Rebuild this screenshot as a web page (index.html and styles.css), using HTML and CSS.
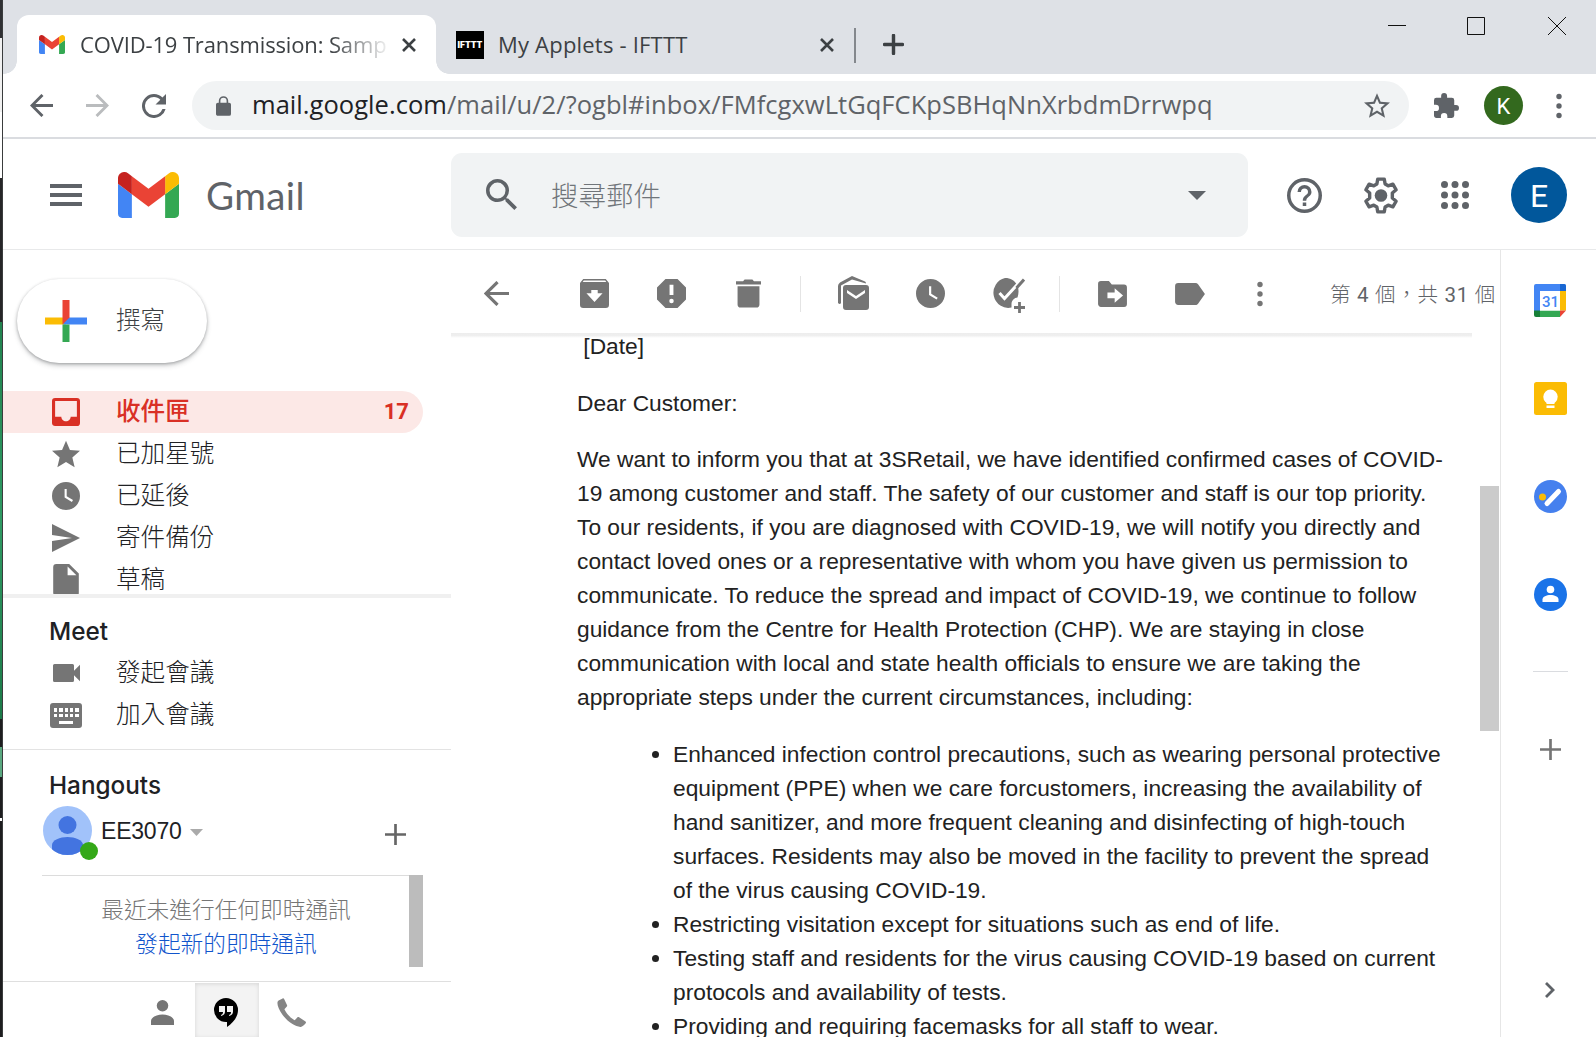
FILE: index.html
```html
<!DOCTYPE html>
<html lang="zh-Hant">
<head>
<meta charset="utf-8">
<title>COVID-19 Transmission: Sample - Gmail</title>
<link rel="stylesheet" href="styles.css">
</head>
<body>
<svg class="sprite" aria-hidden="true">
  <symbol id="gmail" viewBox="52 42 88 66" preserveAspectRatio="none"><path fill="#4285f4" d="M58 108h14V74L52 59v43c0 3.32 2.69 6 6 6"/><path fill="#34a853" d="M120 108h14c3.32 0 6-2.69 6-6V59l-20 15"/><path fill="#fbbc04" d="M120 48v26l20-15v-8c0-7.42-8.47-11.65-14.4-7.2"/><path fill="#ea4335" d="M72 74V48l24 18 24-18v26L96 92"/><path fill="#c5221f" d="M52 51v8l20 15V48l-5.6-4.2c-5.94-4.45-14.4-.22-14.4 7.2"/></symbol>
  <symbol id="close" viewBox="0 0 16 16"><path d="M2 2l12 12M14 2L2 14" fill="none" stroke="currentColor" stroke-width="2.6"/></symbol>
  <symbol id="plus" viewBox="0 0 22 22"><path d="M11 0v22M0 11h22" fill="none" stroke="currentColor" stroke-width="2.8"/></symbol>
  <symbol id="plus-bold" viewBox="0 0 22 22"><path d="M11 1.500v19M1.500 11h19" fill="none" stroke="currentColor" stroke-width="3.6" stroke-linecap="round"/></symbol>
  <symbol id="arrow" viewBox="0 0 24 24"><path d="M24 12H2M13 1L2 12l11 11" fill="none" stroke="currentColor" stroke-width="3"/></symbol>
  <symbol id="reload" viewBox="4 4 16 16"><path d="M17.65 6.35A7.96 7.96 0 0 0 12 4a8 8 0 1 0 7.73 10h-2.08A6 6 0 1 1 12 6c1.66 0 3.14.69 4.22 1.78L13 11h7V4z"/></symbol>
  <symbol id="lock" viewBox="4 1 16 21"><path d="M18 8h-1V6A5 5 0 0 0 7 6v2H6a2 2 0 0 0-2 2v10c0 1.100.9 2 2 2h12a2 2 0 0 0 2-2V10a2 2 0 0 0-2-2zM8.700 8V6a3.300 3.300 0 0 1 6.600 0v2z"/></symbol>
  <symbol id="star-o" viewBox="2 2 20 19"><path d="M22 9.240l-7.190-.620L12 2 9.190 8.630 2 9.240l5.460 4.730L5.820 21 12 17.270 18.180 21l-1.630-7.030zM12 15.400l-3.760 2.270 1-4.280-3.320-2.880 4.380-.380L12 6.100l1.710 4.040 4.380.380-3.320 2.880 1 4.280z"/></symbol>
  <symbol id="star" viewBox="2 2 20 19"><path d="M12 17.270L18.180 21l-1.640-7.030L22 9.240l-7.190-.610L12 2 9.190 8.630 2 9.240l5.460 4.730L5.820 21z"/></symbol>
  <symbol id="puzzle" viewBox="2 1 21 21"><path d="M20.500 11H19V7a2 2 0 0 0-2-2h-4V3.500a2.500 2.500 0 0 0-5 0V5H4a2 2 0 0 0-2 2v3.800h1.500a2.700 2.700 0 0 1 0 5.400H2V20c0 1.100.9 2 2 2h3.800v-1.500a2.700 2.700 0 0 1 5.400 0V22H17a2 2 0 0 0 2-2v-4h1.500a2.500 2.500 0 0 0 0-5z"/></symbol>
  <symbol id="dots" viewBox="0 0 6 26"><circle cx="3" cy="3.500" r="2.700"/><circle cx="3" cy="13" r="2.700"/><circle cx="3" cy="22.500" r="2.700"/></symbol>
  <symbol id="menu" viewBox="0 0 32 22"><path d="M0 0h32v4H0zM0 9h32v4H0zM0 18h32v4H0z"/></symbol>
  <symbol id="search" viewBox="3 3 17.500 17.500"><path d="M15.500 14h-.790l-.280-.270A6.470 6.470 0 0 0 16 9.500 6.500 6.500 0 1 0 9.500 16c1.610 0 3.090-.590 4.230-1.570l.270.280v.790l5 4.990L20.490 19zm-6 0a4.500 4.500 0 1 1 0-9 4.500 4.500 0 0 1 0 9z"/></symbol>
  <symbol id="caret" viewBox="0 0 18 9" preserveAspectRatio="none"><path d="M0 0h18L9 9z"/></symbol>
  <symbol id="help" viewBox="2 2 20 20"><path d="M11 18h2v-2h-2zm1-16a10 10 0 1 0 0 20 10 10 0 0 0 0-20zm0 18a8 8 0 1 1 0-16 8 8 0 0 1 0 16zm0-14a4 4 0 0 0-4 4h2a2 2 0 1 1 4 0c0 2-3 1.750-3 5h2c0-2.250 3-2.500 3-5a4 4 0 0 0-4-4z"/></symbol>
  <symbol id="gear" viewBox="2 1.800 20 20.400"><path fill="none" stroke="currentColor" stroke-width="1.900" stroke-linejoin="round" d="M10.200 2.900h3.600l.5 2.700 1.700 1 2.600-.9 1.800 3.100-2.100 1.800v2.800l2.100 1.800-1.800 3.100-2.600-.9-1.700 1-.5 2.700h-3.600l-.5-2.700-1.700-1-2.600.9-1.800-3.100 2.100-1.800v-2.800L3.600 8.800l1.800-3.100 2.600.9 1.700-1z"/><circle cx="12" cy="12" r="3.500"/></symbol>
  <symbol id="apps" viewBox="0 0 28 28"><circle cx="3.500" cy="3.500" r="3.500"/><circle cx="14" cy="3.500" r="3.500"/><circle cx="24.500" cy="3.500" r="3.500"/><circle cx="3.500" cy="14" r="3.500"/><circle cx="14" cy="14" r="3.500"/><circle cx="24.500" cy="14" r="3.500"/><circle cx="3.500" cy="24.500" r="3.500"/><circle cx="14" cy="24.500" r="3.500"/><circle cx="24.500" cy="24.500" r="3.500"/></symbol>
  <symbol id="inbox" viewBox="3 3 18 18"><path d="M19 3H5a2 2 0 0 0-2 2v14c0 1.100.9 2 2 2h14a2 2 0 0 0 2-2V5a2 2 0 0 0-2-2zm0 12h-4c0 1.660-1.350 3-3 3s-3-1.340-3-3H5V5h14z"/></symbol>
  <symbol id="clock" viewBox="2 2 20 20"><path d="M12 2a10 10 0 1 0 0 20 10 10 0 0 0 0-20zm4.200 14.200L11 13V7h1.500v5.200l4.500 2.700z"/></symbol>
  <symbol id="send" viewBox="2 3 21 18" preserveAspectRatio="none"><path d="M2 21l21-9L2 3v7l15 2-15 2z"/></symbol>
  <symbol id="draft" viewBox="4 2 16 20"><path d="M6 2a2 2 0 0 0-2 2v16c0 1.100.9 2 2 2h12a2 2 0 0 0 2-2V8l-6-6zm7 7V3.500L18.500 9z"/></symbol>
  <symbol id="video" viewBox="3 6 18 12"><path d="M17 10.500V7a1 1 0 0 0-1-1H4a1 1 0 0 0-1 1v10a1 1 0 0 0 1 1h12a1 1 0 0 0 1-1v-3.500l4 4v-11z"/></symbol>
  <symbol id="keyboard" viewBox="0 0 32 25"><path fill-rule="evenodd" d="M3 0h26a3 3 0 0 1 3 3v19a3 3 0 0 1-3 3H3a3 3 0 0 1-3-3V3a3 3 0 0 1 3-3zM4 5v4h3V5zm5 0v4h4V5zm6 0v4h3V5zm5 0v4h3V5zm5 0v4h4V5zM4 11v3h3v-3zm5 0v3h4v-3zm6 0v3h3v-3zm5 0v3h3v-3zm5 0v3h4v-3zM9 18v3h14v-3z"/></symbol>
  <symbol id="person" viewBox="0 0 24 26"><circle cx="12" cy="6" r="6"/><path d="M0 26v-4c0-4 6-7 12-7s12 3 12 7v4z"/></symbol>
  <symbol id="hangouts" viewBox="0 0 24 29"><path fill-rule="evenodd" d="M12 0a12 12 0 0 1 12 12c0 7-5 13-11 17v-5h-1A12 12 0 0 1 12 0zM5 8v6h4c0 1.500-.5 2.500-2 3v1c3-.5 4-2.500 4-4.500V8zm8 0v6h4c0 1.500-.5 2.500-2 3v1c3-.5 4-2.500 4-4.500V8z"/></symbol>
  <symbol id="phone" viewBox="3 3 18 18"><path d="M6.500 3.300L4 4.500C2.500 5.500 3.300 9 6.500 13.500S14.500 20.500 17.500 21c1 .1 2-.8 3.300-2.300.3-.4.200-.8-.1-1.100l-4-2.600c-.4-.2-.8-.2-1.100.1l-1.600 1.700C12 16 8.800 12.700 7.600 10l1.500-1.700c.2-.3.300-.5.1-.9L7.500 3.700c-.2-.4-.6-.6-1-.4z"/></symbol>
  <symbol id="archive" viewBox="3 3 18 18"><path fill-rule="evenodd" d="M5 3h14l2 2.500V19a2 2 0 0 1-2 2H5a2 2 0 0 1-2-2V5.500zm.3 1l-.6.900h14.600l-.6-.9zM10 9.800v2H7l5 5.500 5-5.500h-3v-2z"/></symbol>
  <symbol id="spam" viewBox="3 3 18 18"><path d="M15.730 3H8.270L3 8.270v7.460L8.270 21h7.460L21 15.730V8.270zM12 18a1.400 1.400 0 1 1 0-2.800 1.400 1.400 0 0 1 0 2.800zm1.200-5h-2.400V6.500h2.400z"/></symbol>
  <symbol id="trash" viewBox="4 3 16 18"><path d="M5 19a2 2 0 0 0 2 2h10a2 2 0 0 0 2-2V7.300H5zM20 4.200h-4.500L14.500 3h-5l-1 1.200H4v2h16z"/></symbol>
  <symbol id="unread" viewBox="0 0 31 34"><path fill-rule="evenodd" d="M0 27V10q0-2 2-3.500L14 0l13 5.500q1 .5 1 2L14 3.500 3 9.500V27q-1 2-3 0zM8 9h20a3 3 0 0 1 3 3v19a3 3 0 0 1-3 3H8a3 3 0 0 1-3-3V12a3 3 0 0 1 3-3zm1 5v3l9 6 9-6v-3l-9 6z"/></symbol>
  <symbol id="task" viewBox="0 0 34 36"><path d="M14 1c6 0 9 2.500 11.500 6 2.500 4 2.500 9 1 13.500-3 0-6 3-6 6.500v3.500A14.500 14.800 0 1 1 14 1z"/><path d="M30 3.500L13.500 21.500l-5-5.500" fill="none" stroke="#fff" stroke-width="3"/><path d="M33 2.500L25.500 11" fill="none" stroke="currentColor" stroke-width="3"/><path d="M28.500 25v11M23 30.500h11" fill="none" stroke="currentColor" stroke-width="2.800"/></symbol>
  <symbol id="move" viewBox="2 4 20 18"><path d="M20 6.500h-8.500L9.500 4H4a2 2 0 0 0-2 2v14c0 1.100.9 2 2 2h16a2 2 0 0 0 2-2V8.500a2 2 0 0 0-2-2zM13.500 19v-3H8.500v-4h5V9l5.800 5z"/></symbol>
  <symbol id="label" viewBox="3 5 19 14"><path d="M17.630 5.840A2 2 0 0 0 16 5H5a2 2 0 0 0-2 2v10c0 1.100.9 2 2 2h11c.670 0 1.270-.330 1.630-.840L22 12z"/></symbol>
  <symbol id="chevron" viewBox="0 0 10 16"><path d="M1 1l7 7-7 7" fill="none" stroke="currentColor" stroke-width="2.800"/></symbol>
</svg>

<div class="screen">
  <div class="desktop-edge"><i class="e1"></i><i class="e2"></i><i class="e3"></i><i class="e4"></i><i class="e5"></i><i class="e6"></i></div>
  <div class="window">
    <div class="tabs">
      <div class="tab active">
        <svg class="fav"><use href="#gmail"/></svg>
        <span class="tab-title t1">COVID-19 Transmission: Samp</span>
        <svg class="x"><use href="#close"/></svg>
      </div>
      <div class="tab second">
        <span class="ifttt">IFTTT</span>
        <span class="tab-title t2">My Applets - IFTTT</span>
        <svg class="x"><use href="#close"/></svg>
      </div>
      <svg class="newtab"><use href="#plus-bold"/></svg>
      <div class="winctl">
        <svg width="18" height="18"><path d="M0 8.500h18"/></svg>
        <svg width="18" height="18"><path d="M.5.5h17v17H.5z"/></svg>
        <svg width="18" height="18"><path d="M0 0l18 18M18 0L0 18"/></svg>
      </div>
    </div>

    <div class="addressbar">
      <svg class="nav-i"><use href="#arrow"/></svg>
      <svg class="nav-i fwd"><use href="#arrow"/></svg>
      <svg class="nav-i reload"><use href="#reload"/></svg>
      <div class="omnibox">
        <svg class="lock"><use href="#lock"/></svg>
        <span class="url"><b>mail.google.com</b>/mail/u/2/?ogbl#inbox/FMfcgxwLtGqFCKpSBHqNnXrbdmDrrwpq</span>
        <svg class="bookmark"><use href="#star-o"/></svg>
      </div>
      <svg class="ext"><use href="#puzzle"/></svg>
      <span class="profile">K</span>
      <svg class="more"><use href="#dots"/></svg>
    </div>

    <header class="gm-header">
      <svg class="burger"><use href="#menu"/></svg>
      <svg class="logo"><use href="#gmail"/></svg>
      <span class="brand">Gmail</span>
      <div class="search">
        <svg class="search-i"><use href="#search"/></svg>
        <span class="ph">搜尋郵件</span>
        <svg class="drop"><use href="#caret"/></svg>
      </div>
      <svg class="help"><use href="#help"/></svg>
      <svg class="gear"><use href="#gear"/></svg>
      <svg class="apps"><use href="#apps"/></svg>
      <span class="account">E</span>
    </header>

    <div class="body">
      <aside class="side">
        <div class="upper">
          <button class="compose">
            <svg width="42" height="42" viewBox="0 0 42 42"><path fill="#fbbc04" d="M0 17.500h21v7H0z"/><path fill="#4285f4" d="M21 17.500h21v7H18z"/><path fill="#34a853" d="M17.500 24.500h7V42h-7z"/><path fill="#ea4335" d="M17.500 0h7v17.500l-7 7z"/></svg>
            <span>撰寫</span>
          </button>
          <nav>
            <div class="row on"><svg class="ic i28"><use href="#inbox"/></svg><span>收件匣</span><em>17</em></div>
            <div class="row"><svg class="ic i28"><use href="#star"/></svg><span>已加星號</span></div>
            <div class="row"><svg class="ic i28"><use href="#clock"/></svg><span>已延後</span></div>
            <div class="row"><svg class="ic i28"><use href="#send"/></svg><span>寄件備份</span></div>
            <div class="row last"><svg class="ic draft"><use href="#draft"/></svg><span>草稿</span></div>
          </nav>
        </div>
        <section class="meet">
          <h2>Meet</h2>
          <div class="row"><svg class="ic video"><use href="#video"/></svg><span>發起會議</span></div>
          <div class="row"><svg class="ic kb"><use href="#keyboard"/></svg><span>加入會議</span></div>
        </section>
        <section class="hang">
          <h2>Hangouts</h2>
          <div class="user">
            <div class="avatar">
              <svg width="49" height="49" viewBox="0 0 49 49"><defs><clipPath id="av"><circle cx="24.500" cy="24.500" r="24.500"/></clipPath></defs><g clip-path="url(#av)"><path fill="#a1c2fa" d="M0 0h49v49H0z"/><g fill="#4374e0"><circle cx="24.500" cy="19" r="9"/><path d="M9 49V39c0-5 8-8 15.500-8S40 34 40 39v10z"/></g></g></svg>
              <i class="online"></i>
            </div>
            <span class="name">EE3070</span>
            <svg class="user-drop"><use href="#caret"/></svg>
            <svg class="add"><use href="#plus"/></svg>
          </div>
          <div class="chats">
            <div class="msg"><p>最近未進行任何即時通訊</p><p><a>發起新的即時通訊</a></p></div>
            <i class="thumb"></i>
          </div>
          <div class="switch">
            <span><svg width="23" height="25"><use href="#person"/></svg></span>
            <span class="sel"><svg width="24" height="29"><use href="#hangouts"/></svg></span>
            <span class="dial"><svg width="29" height="29"><use href="#phone"/></svg></span>
          </div>
        </section>
      </aside>

      <main class="mail">
        <div class="toolbar">
          <svg class="t-back"><use href="#arrow"/></svg>
          <svg class="t-arch"><use href="#archive"/></svg>
          <svg class="t-spam"><use href="#spam"/></svg>
          <svg class="t-trash"><use href="#trash"/></svg>
          <i class="sep"></i>
          <svg class="t-unread"><use href="#unread"/></svg>
          <svg class="t-clock"><use href="#clock"/></svg>
          <svg class="t-task"><use href="#task"/></svg>
          <i class="sep s2"></i>
          <svg class="t-move"><use href="#move"/></svg>
          <svg class="t-label"><use href="#label"/></svg>
          <svg class="t-dots"><use href="#dots"/></svg>
          <span class="count">第 <b>4</b> 個，共 <b>31</b> 個</span>
        </div>
        <div class="scroll">
          <article class="letter">
            <p>&nbsp;[Date]</p>
            <p>Dear Customer:</p>
            <p>We want to inform you that at 3SRetail, we have identified confirmed cases of COVID-<br>19 among customer and staff. The safety of our customer and staff is our top priority.<br>To our residents, if you are diagnosed with COVID-19, we will notify you directly and<br>contact loved ones or a representative with whom you have given us permission to<br>communicate. To reduce the spread and impact of COVID-19, we continue to follow<br>guidance from the Centre for Health Protection (CHP). We are staying in close<br>communication with local and state health officials to ensure we are taking the<br>appropriate steps under the current circumstances, including:</p>
            <ul>
              <li>Enhanced infection control precautions, such as wearing personal protective<br>equipment (PPE) when we care forcustomers, increasing the availability of<br>hand sanitizer, and more frequent cleaning and disinfecting of high-touch<br>surfaces. Residents may also be moved in the facility to prevent the spread<br>of the virus causing COVID-19.</li>
              <li>Restricting visitation except for situations such as end of life.</li>
              <li>Testing staff and residents for the virus causing COVID-19 based on current<br>protocols and availability of tests.</li>
              <li>Providing and requiring facemasks for all staff to wear.</li>
            </ul>
          </article>
          <i class="scrollthumb"></i>
        </div>
      </main>

      <aside class="apps-rail">
        <svg width="32" height="33" viewBox="0 0 32 33"><path fill="#4285f4" d="M2 0h28a2 2 0 0 1 2 2v5H6v20H0V2a2 2 0 0 1 2-2z"/><path fill="#1967d2" d="M26 0h4a2 2 0 0 1 2 2v5h-6z"/><path fill="#fbbc04" d="M26 7h6v19.500h-6z"/><path fill="#34a853" d="M6 26.500h20V33H6z"/><path fill="#188038" d="M0 26.500h6V33H2a2 2 0 0 1-2-2z"/><path fill="#ea4335" d="M26 26.500h6L26 33z"/><path fill="#fff" d="M6 7h20v19.500H6z"/><text x="16.500" y="22.500" text-anchor="middle" class="cal-n">31</text></svg>
        <svg width="33" height="33" viewBox="0 0 33 33"><rect width="33" height="33" rx="2.500" fill="#fbbc04"/><g fill="#fff"><circle cx="16.500" cy="14.800" r="7.200"/><path d="M12.500 18h8v4h-8zM12.500 23.500h8V26h-8z"/></g></svg>
        <svg width="33" height="33" viewBox="0 0 33 33"><circle cx="16.500" cy="16.500" r="16.500" fill="#4580ee"/><circle cx="8.500" cy="17" r="3.500" fill="#fbbc04"/><path d="M13 23.500L24.500 11.500" stroke="#fff" stroke-width="5" stroke-linecap="round"/></svg>
        <svg width="33" height="33" viewBox="0 0 33 33"><circle cx="16.500" cy="16.500" r="16.500" fill="#1a73e8"/><g fill="#fff"><circle cx="16.500" cy="11.500" r="3.800"/><path d="M8.500 24v-2.500c0-3 4-4.500 8-4.500s8 1.500 8 4.500V24z"/></g></svg>
        <i class="rail-line"></i>
        <svg class="rail-plus"><use href="#plus"/></svg>
        <svg class="rail-chev"><use href="#chevron"/></svg>
      </aside>
    </div>
  </div>
</div>
</body>
</html>
```
FILE: styles.css
```css
* { box-sizing: border-box; }
body { margin: 0; background: #fff; font-family: Roboto, "Noto Sans CJK TC", sans-serif; color: #202124; }
svg { display: block; flex: none; fill: currentColor; }
p, h2, ul { margin: 0; }
i, em { font-style: normal; }
.sprite { position: absolute; width: 0; height: 0; }
.screen { width: 1596px; height: 1037px; display: flex; overflow: hidden; }

/* sliver of the desktop left of the window */
.desktop-edge { width: 3px; flex: none; display: flex; flex-direction: column; background: #1d1d1f; border-right: 1px solid #3a3c3d; }
.e1 { height: 38px; background: #2f3033; }
.e2 { height: 140px; background: linear-gradient(#f1f1f1 74px, #fff 74px); }
.e3 { height: 144px; background: #262628; }
.e4 { height: 397px; background: linear-gradient(#21834f, #2f9a63 50%, #1c7a48); }
.e5 { height: 30px; margin-top: 28px; background: #5aa880; }
.e6 { height: 3px; margin-top: 41px; background: #fff; }

.window { flex: 1; min-width: 0; display: flex; flex-direction: column; }

/* tab strip */
.tabs { height: 74px; flex: none; display: flex; background: #dee1e6; padding-left: 14px; color: #3c4043; }
.tab { display: flex; align-items: center; height: 59px; margin-top: 15px; position: relative; font: 22px "Open Sans", sans-serif; }
.tab.active { width: 419px; background: #fff; border-radius: 12px 12px 0 0; padding-left: 22px; }
.tab.active::before, .tab.active::after { content: ""; position: absolute; bottom: 0; width: 13px; height: 13px; }
.tab.active::before { left: -13px; background: radial-gradient(circle at 0 0, transparent 12.5px, #fff 13px); }
.tab.active::after { right: -13px; background: radial-gradient(circle at 100% 0, transparent 12.5px, #fff 13px); }
.fav { width: 26px; height: 19px; }
.tab-title { white-space: nowrap; line-height: 36px; margin-top: -2px; }
.t1 { margin-left: 15px; width: 306px; letter-spacing: -.14px; -webkit-mask-image: linear-gradient(90deg, #000 250px, transparent 312px); }
.x { width: 16px; height: 16px; }
.active .x { margin-left: 15px; }
.second { width: 420px; padding-left: 20px; }
.second::after { content: ""; position: absolute; right: 0; top: 13px; width: 2px; height: 35px; background: #84888d; }
.ifttt { width: 28px; height: 28px; background: #000; color: #fff; font: 900 8.5px/28px Inter, sans-serif; text-align: center; }
.t2 { margin-left: 14px; width: 321px; letter-spacing: .2px; }
.newtab { width: 21px; height: 21px; margin: 34px 0 0 27px; }
.winctl { margin-left: auto; display: flex; gap: 62px; padding: 17px 30px 0 0; }
.winctl svg { fill: none; stroke: #111; stroke-width: 1; overflow: visible; }
.winctl svg:nth-child(2) { margin: 0 1px 0 -1px; }

/* address bar */
.addressbar { height: 65px; flex: none; display: flex; align-items: center; border-bottom: 2px solid #dadce0; color: #5f6368; padding-left: 27px; }
.nav-i { width: 23px; height: 23px; }
.fwd { transform: scaleX(-1); margin-left: 33px; color: #babcbe; }
.reload { width: 24px; height: 24px; margin-left: 33px; }
.omnibox { width: 1217px; height: 49px; margin-left: 26px; border-radius: 25px; background: #f1f3f4; display: flex; align-items: center; padding-left: 24px; }
.lock { width: 15px; height: 20px; }
.url { margin: -3px 0 0 21px; width: 1112px; font: 25.500px/40px "Open Sans", sans-serif; letter-spacing: .04px; white-space: nowrap; }
.url b { font-weight: 400; color: #202124; }
.bookmark { width: 26px; height: 25px; }
.ext { width: 25px; height: 25px; margin-left: 25px; }
.profile { width: 39px; height: 39px; margin-left: 25px; border-radius: 50%; background: #33691e; color: #fff; font: 22px/41px Roboto, sans-serif; text-align: center; flex: none; }
.more { width: 6px; height: 26px; margin-left: 33px; }

/* mail header */
.gm-header { height: 111px; flex: none; display: flex; align-items: center; border-bottom: 1px solid #e8e9ea; color: #5f6368; padding: 2px 0 0 47px; }
.burger { width: 32px; height: 22px; }
.logo { width: 61px; height: 46px; margin-left: 36px; }
.brand { margin-left: 27px; width: 245px; font: 38.500px/50px Lato, sans-serif; letter-spacing: .4px; }
.search { width: 797px; height: 84px; border-radius: 11px; background: #f1f3f4; display: flex; align-items: center; padding-left: 35px; flex: none; }
.search-i { width: 31px; height: 31px; margin-top: -2px; }
.ph { margin: -2px 0 0 34px; width: 637px; font-size: 27.500px; font-weight: 300; color: #70757a; }
.drop { width: 18px; height: 9px; }
.help { width: 35px; height: 35px; margin-left: 39px; }
.gear { width: 36px; height: 37px; margin-left: 41px; }
.apps { width: 28px; height: 28px; margin-left: 42px; }
.account { width: 56px; height: 56px; margin-left: 42px; border-radius: 50%; background: #01579b; color: #fff; font: 32px/58px Roboto, sans-serif; text-align: center; flex: none; }

.body { flex: 1; min-height: 0; display: flex; }

/* left column */
.side { width: 448px; flex: none; display: flex; flex-direction: column; }
.upper { height: 348px; overflow: hidden; border-bottom: 4px solid #f0f0f0; padding-top: 29px; flex: none; }
.compose { width: 190px; height: 84px; margin: 0 0 28px 14px; border: 0; border-radius: 42px; background: #fff; box-shadow: 0 1px 3px rgba(60,64,67,.35), 0 3px 5px rgba(60,64,67,.22); display: flex; align-items: center; padding: 0 0 0 28px; font: 300 24.500px Roboto, "Noto Sans CJK TC", sans-serif; color: #3c4043; }
.compose span { margin: -5px 0 0 29px; }
.row { height: 42px; display: flex; align-items: center; padding-left: 49px; font-weight: 300; font-size: 24.600px; line-height: 42px; }
.row span { margin-left: 36px; }
.ic { color: #757575; }
.i28 { width: 28px; height: 28px; }
.row.on { width: 420px; border-radius: 0 21px 21px 0; background: #fce8e6; color: #d93025; font-weight: 500; }
.on .ic { color: #d93025; }
.row em { margin-left: auto; padding-right: 14px; font: 700 22px/44px Roboto, sans-serif; }
.draft { width: 26px; height: 32px; margin: 0 1px; }
.meet { height: 152px; flex: none; border-bottom: 1px solid #e3e3e3; padding-top: 12px; }
h2 { font: 500 24.300px/42px Inter, sans-serif; padding-left: 46px; }
.video { width: 27px; height: 18px; margin-left: 1px; }
.kb { width: 32px; height: 25px; margin: 0 -2px; }
.hang { flex: 1; display: flex; flex-direction: column; padding-top: 14px; }
.user { height: 69px; flex: none; margin-left: 40px; width: 380px; display: flex; align-items: flex-start; }
.avatar { position: relative; width: 49px; height: 49px; }
.online { position: absolute; left: 37px; top: 36px; width: 18px; height: 18px; border-radius: 50%; background: #34a818; }
.name { font: 23px/51px "Liberation Sans", sans-serif; margin-left: 9px; width: 88px; letter-spacing: -.2px; }
.user-drop { width: 13px; height: 7px; margin-top: 23px; margin-left: 1px; color: #aaa; }
.add { width: 21px; height: 21px; margin: 18px 0 0 182px; color: #666; }
.chats { margin-left: 39px; width: 381px; height: 92px; flex: none; display: flex; }
.msg { width: 367px; border-top: 1px solid #dcdcdc; padding-top: 18px; font-weight: 300; font-size: 22.700px; line-height: 34px; text-align: center; color: #757575; }
.msg p { margin-right: -1px; }
.msg a { color: #15c; }
.thumb { width: 14px; background: #bcbcbc; }
.switch { margin-top: 14px; flex: 1; border-top: 1px solid #dfdfdf; display: flex; justify-content: center; padding-top: 1px; color: #757575; }
.switch span { width: 64px; display: flex; justify-content: center; align-items: center; padding: 5px 2px 0 0; }
.switch .sel { background: #f3f3f3; box-shadow: inset 0 1px 4px rgba(0,0,0,.12); color: #000; }
.switch .dial { padding-right: 0; color: #858585; }

/* message pane */
.mail { flex: 1; min-width: 0; display: flex; flex-direction: column; }
.toolbar { position: relative; z-index: 1; height: 83px; flex: none; background: #fff; display: flex; align-items: center; color: #757575; padding: 4px 0 0 33px; }
.toolbar::after { content: ""; position: absolute; left: 0; bottom: -5px; width: 1021px; height: 5px; background: linear-gradient(#ededed, #efefef 50%, #fff); }
.t-back { width: 25px; height: 25px; }
.t-arch { width: 29px; height: 29px; margin-left: 71px; }
.t-spam { width: 29px; height: 29px; margin-left: 48px; }
.t-trash { width: 25px; height: 29px; margin-left: 50px; }
.sep { width: 1px; height: 36px; margin-left: 39px; background: #e4e4e4; }
.t-unread { width: 31px; height: 34px; margin: -2px 0 0 37px; }
.t-clock { width: 29px; height: 29px; margin-left: 47px; }
.t-task { width: 34px; height: 36px; margin: 3px 0 0 46px; }
.s2 { margin-left: 34px; }
.t-move { width: 29px; height: 26px; margin-left: 38px; }
.t-label { width: 30px; height: 22px; margin-left: 48px; }
.t-dots { width: 6px; height: 26px; margin-left: 52px; }
.count { margin: -2px 0 0 67px; font-size: 20.500px; font-weight: 300; letter-spacing: .75px; white-space: nowrap; color: #5f6368; }
.count b { font-weight: 400; }
.scroll { flex: 1; min-height: 0; margin-top: -4px; display: flex; overflow: hidden; }
.letter { width: 1030px; padding-left: 126px; font: 22.750px/34px "Liberation Sans", sans-serif; color: #222; white-space: nowrap; }
.letter p { margin-bottom: 22.670px; }
.letter ul { padding-left: 96px; }
.scrollthumb { width: 19px; height: 245px; margin: 157px 0 0 -1px; background: #cbcbcb; }

/* right rail */
.apps-rail { width: 96px; flex: none; border-left: 1px solid #e6e6e6; display: flex; flex-direction: column; align-items: center; gap: 65px; padding: 34px 0 0 3px; }
.cal-n { font: 500 15px Roboto, sans-serif; fill: #4285f4; }
.rail-line { width: 35px; height: 1px; background: #dadce0; margin-top: -5px; }
.rail-plus { width: 21px; height: 21px; color: #757575; margin-top: 2px; }
.rail-chev { width: 10px; height: 16px; color: #5f6368; margin-top: 157px; }
```
